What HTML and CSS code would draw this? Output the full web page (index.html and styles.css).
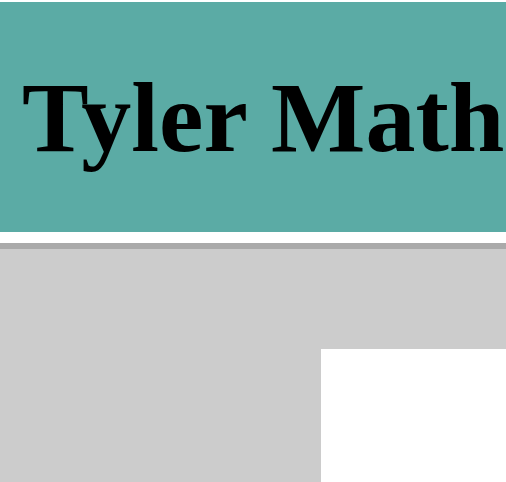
FILE: index.html
```html
<!DOCTYPE html>
<html>
<head>
<meta charset="utf-8">
<link rel="stylesheet" href="styles.css">
</head>
<body>
<header class="site-header">
  <h1 class="site-title">Tyler Math</h1>
</header>
<main class="page">
  <aside class="sidebar"></aside>
  <section class="content">
    <p class="content-text">Welcome</p>
  </section>
</main>
</body>
</html>
```

FILE: styles.css
```css
html, body {
  margin: 0;
  padding: 0;
  background: #ffffff;
  overflow: hidden;
}

.site-header {
  margin-top: 2px;
  height: 230px;
  box-sizing: border-box;
  background: #5baba5;
  padding: 58px 0 0 22px;
}

.site-title {
  margin: 0;
  font-family: "Liberation Serif", "Times New Roman", serif;
  font-weight: bold;
  font-size: 100px;
  line-height: normal;
  color: #000;
  white-space: nowrap;
}

.page {
  margin-top: 11px;
  border-top: 6px solid #aaaaaa;
  background: #cccccc;
  padding-top: 100px;
  display: grid;
  grid-template-columns: 321px 1fr;
  min-height: 400px;
}

.content {
  background: #ffffff;
  min-height: 300px;
  padding: 131px 0 0 28px;
  text-align: center;
}

.content-text {
  margin: 0;
  font-family: "Liberation Serif", "Times New Roman", serif;
  font-size: 16px;
  color: #000;
}
```
